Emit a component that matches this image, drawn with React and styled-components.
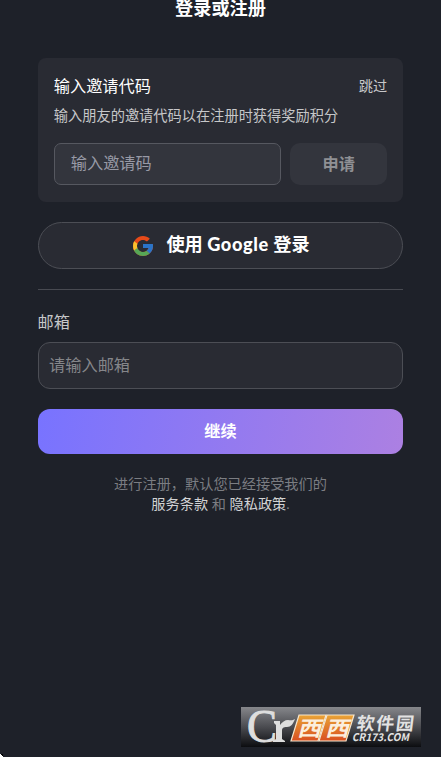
import React from "react";
import styled, { createGlobalStyle } from "styled-components";

export default function LoginPage() {
  return (
    <>
      <GlobalStyle />
      <PageContainer>
        <Title>登录或注册</Title>

        <InviteCard>
          <CardHeader>
            <CardTitle>输入邀请代码</CardTitle>
            <SkipButton>跳过</SkipButton>
          </CardHeader>
          <CardDesc>输入朋友的邀请代码以在注册时获得奖励积分</CardDesc>
          <InviteRow>
            <InviteInput placeholder="输入邀请码" />
            <ApplyButton>申请</ApplyButton>
          </InviteRow>
        </InviteCard>

        <GoogleButton>
          <GoogleIcon />
          <GoogleText>
            使用 <Brand>Google</Brand> 登录
          </GoogleText>
        </GoogleButton>

        <Divider />

        <Label htmlFor="email">邮箱</Label>
        <EmailInput id="email" placeholder="请输入邮箱" />
        <ContinueButton>继续</ContinueButton>

        <Terms>
          进行注册，默认您已经接受我们的
          <br />
          <TermsLink>服务条款</TermsLink> 和 <TermsLink>隐私政策</TermsLink>.
        </Terms>

        <Watermark>
          <WatermarkLogo />
        </Watermark>
        <Corner />
      </PageContainer>
    </>
  );
}

function GoogleIcon() {
  return (
    <svg width="20" height="20" viewBox="4 4 40 40">
      <path fill="#e64a19" d="M43.6 20H42V20H24v8h11.3C33.7 32.7 29.2 36 24 36c-6.6 0-12-5.4-12-12s5.4-12 12-12c3.1 0 5.8 1.2 8 3l5.7-5.6C34 6.1 29.3 4 24 4 13 4 4 13 4 24s9 20 20 20 20-9 20-20c0-1.3-.1-2.7-.4-4z" />
      <path fill="#fbc02d" d="M6.3 14.7C4.8 17.5 4 20.6 4 24c0 3.4.8 6.6 2.3 9.4l6.6-5.1A12 12 0 0 1 12 24c0-1.6.3-3.1.9-4.5z" />
      <path fill="#56a756" d="M24 44c5.2 0 9.9-2 13.4-5.2l-6.2-5.2A12 12 0 0 1 24 36c-5.2 0-9.6-3.3-11.3-7.9l-6.5 5C9.5 39.6 16.2 44 24 44z" />
      <path fill="#2a74c8" d="M43.6 20H24v8h11.3a12 12 0 0 1-4.1 5.6l6.2 5.2C37 39.2 44 34 44 24c0-1.3-.1-2.7-.4-4z" />
    </svg>
  );
}

function WatermarkLogo() {
  return (
    <svg width="180" height="40" viewBox="0 0 180 40">
      <defs>
        <linearGradient id="tile" x1="0" y1="0" x2="0" y2="1">
          <stop offset="0" stopColor="#e9a436" />
          <stop offset="1" stopColor="#d94f20" />
        </linearGradient>
      </defs>
      <LogoSerif x="6" y="35" fontSize="46" textLength="30" lengthAdjust="spacingAndGlyphs">
        C
      </LogoSerif>
      <path
        d="M33 14h6v4c2-3 5-5 8-5 2 0 4 1 7-1-2 5-4 8-8 8-4 0-5 1-5 4v8l3 2v1H32v-1l3-2V18l-2-2z"
        fill="#dedede"
      />
      <g stroke="#f6e6cf" strokeWidth="1.2" fill="url(#tile)">
        <path d="M58 8h27l-8 26H50z" />
        <path d="M86 8h27l-8 26H78z" />
      </g>
      <TileText x="0" y="0" transform="translate(56 28.5) skewX(-15) scale(1.08 0.95)">
        西
      </TileText>
      <TileText x="0" y="0" transform="translate(84 28.5) skewX(-15) scale(1.08 0.95)">
        西
      </TileText>
      <LogoSans x="0" y="0" fontSize="18" fontWeight="700" letterSpacing="1.6" transform="translate(115 22.5) skewX(-7)">
        软件园
      </LogoSans>
      <LogoSans
        x="0"
        y="0"
        fontSize="10.5"
        fontWeight="700"
        textLength="57"
        lengthAdjust="spacingAndGlyphs"
        transform="translate(111 34) skewX(-12)"
      >
        CR173.COM
      </LogoSans>
    </svg>
  );
}

// Styled Components
const GlobalStyle = createGlobalStyle`
  * {
    box-sizing: border-box;
  }

  body {
    margin: 0;
    background: #1e2129;
    overflow: hidden;
  }

  button,
  input {
    font-family: inherit;
    margin: 0;
    outline: none;
  }
`;

const PageContainer = styled.div`
  position: relative;
  height: 757px;
  padding: 0 37.6px;
  display: flex;
  flex-direction: column;
  overflow: hidden;
  font-family: Lato, "Noto Sans CJK SC", sans-serif;
  font-size: 16.2px;
  color: #fff;
  background: #1e2129;
`;

const Title = styled.h1`
  margin: -4px 0 38px;
  font-size: 18.2px;
  font-weight: 700;
  line-height: 24px;
  text-align: center;
`;

const InviteCard = styled.section`
  height: 144px;
  padding: 16px 16.2px 0;
  border-radius: 8px;
  background: #292b33;
`;

const CardHeader = styled.div`
  display: flex;
  align-items: center;
  justify-content: space-between;
  height: 24px;
`;

const CardTitle = styled.div`
  font-size: 16.2px;
  line-height: 24px;
`;

const SkipButton = styled.button`
  border: none;
  padding: 0;
  background: none;
  color: #c6c7c9;
  font-size: 14.2px;
  line-height: 24px;
`;

const CardDesc = styled.p`
  margin: 8px 0 17px;
  font-size: 14.23px;
  line-height: 20px;
  color: #c6c7c9;
`;

const InviteRow = styled.div`
  display: flex;
  gap: 9px;
  height: 42px;
`;

const InviteInput = styled.input`
  flex: 1;
  min-width: 0;
  padding: 0 16px 3px;
  border: 1px solid #565860;
  border-radius: 7px;
  background: #33353d;
  color: #fff;
  font-size: 16.2px;

  &::placeholder {
    color: #989aa6;
  }
`;

const ApplyButton = styled.button`
  width: 97px;
  padding: 0 0 3px;
  border: none;
  border-radius: 10px;
  background: #33353d;
  color: #8f9094;
  font-size: 16.2px;
  font-weight: 700;
`;

const GoogleButton = styled.button`
  display: flex;
  align-items: center;
  justify-content: center;
  gap: 13px;
  height: 47px;
  margin-top: 20px;
  padding: 0 0 0 2px;
  border: 1px solid #4c4e55;
  border-radius: 24px;
  background: #292b33;
  color: #fff;
  font-size: 18.2px;
  font-weight: 700;
`;

const GoogleText = styled.span`
  padding-bottom: 5px;
`;

const Brand = styled.span`
  font-weight: 900;
  letter-spacing: 0.6px;
`;

const Divider = styled.hr`
  width: 100%;
  height: 1px;
  margin: 20px 0;
  border: none;
  background: #484a51;
`;

const Label = styled.label`
  font-size: 16.2px;
  line-height: 24px;
  color: #c6c7c9;
`;

const EmailInput = styled.input`
  height: 47px;
  margin-top: 8px;
  padding: 0 10.5px 2px;
  border: 1px solid #4c4e55;
  border-radius: 12px;
  background: #292b33;
  color: #fff;
  font-size: 16.2px;

  &::placeholder {
    color: #85868a;
  }
`;

const ContinueButton = styled.button`
  height: 45px;
  margin-top: 20px;
  padding: 0 0 4px;
  border: none;
  border-radius: 12px;
  background: linear-gradient(100deg, #7873ff, #ac80e2);
  color: #fff;
  font-size: 16.2px;
  font-weight: 700;
`;

const Terms = styled.p`
  margin: 20px 0 0;
  font-size: 14.2px;
  line-height: 20px;
  text-align: center;
  color: #7b7d82;
`;

const TermsLink = styled.span`
  color: #d2d3d4;
`;

const Watermark = styled.div`
  position: absolute;
  right: 20px;
  bottom: 10px;
  width: 180px;
  height: 40px;
  background: linear-gradient(#86878b, #4a4b50 50%, #0c0d10);
`;

const LogoSerif = styled.text`
  font-family: "Liberation Serif", serif;
  fill: #dedede;
  stroke: #dedede;
  stroke-width: 1px;
`;

const LogoSans = styled.text`
  font-family: "Noto Sans CJK SC", sans-serif;
  fill: #e2e2e2;
`;

const TileText = styled(LogoSans)`
  font-size: 22px;
  font-weight: 700;
  fill: #fbeedd;
`;

// Light notch at the bottom left screen corner
const Corner = styled.div`
  position: absolute;
  left: 0;
  bottom: 0;
  width: 3px;
  height: 3px;
  background: linear-gradient(45deg, #fff 50%, #000 50%);
`;
